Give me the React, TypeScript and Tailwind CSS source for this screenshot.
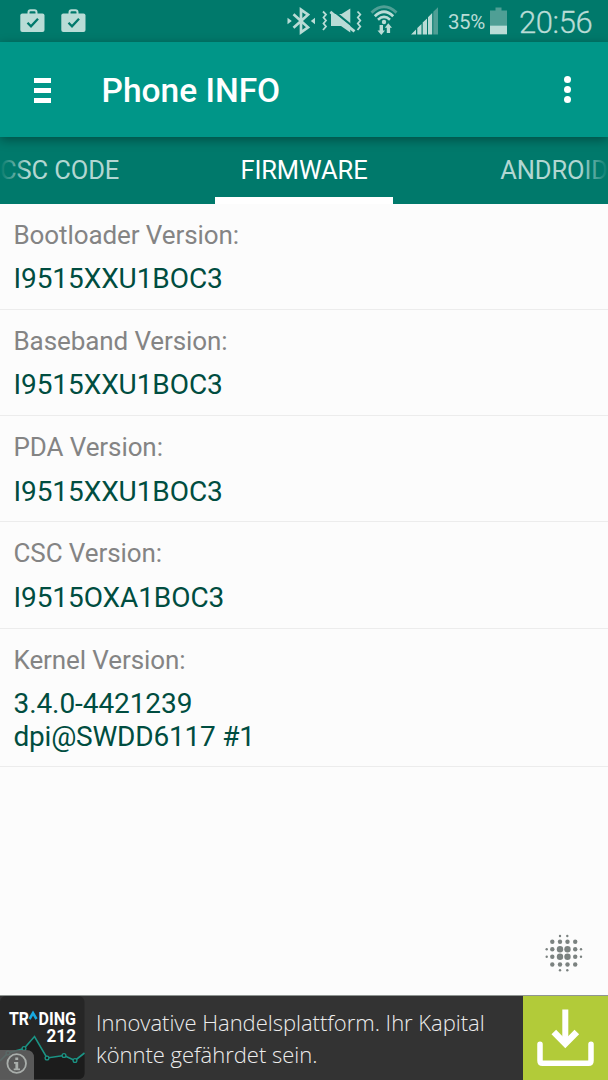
import React, { useState } from "react";
import clsx from "clsx";

const tabs = ["CSC CODE", "FIRMWARE", "ANDROID"];

const rows = [
  { label: "Bootloader Version:", value: ["I9515XXU1BOC3"] },
  { label: "Baseband Version:", value: ["I9515XXU1BOC3"] },
  { label: "PDA Version:", value: ["I9515XXU1BOC3"] },
  { label: "CSC Version:", value: ["I9515OXA1BOC3"] },
  { label: "Kernel Version:", value: ["3.4.0-4421239", "dpi@SWDD6117 #1"] },
];

const BriefcaseIcon = () => (
  <svg width="25" height="24" viewBox="0 0 25 24">
    <path d="M8.5 6V3.2Q8.5 1.2 10.5 1.2H14.5Q16.5 1.2 16.5 3.2V6" fill="none" stroke="#b9dcd6" strokeWidth="2" />
    <rect x="0.3" y="4.6" width="24.2" height="18.3" rx="2" fill="#b9dcd6" />
    <path d="M7.5 13.8L11 17.4L18 9.8" fill="none" stroke="#00796b" strokeWidth="2.3" />
  </svg>
);

const StatusIcons = () => (
  <svg width="160" height="42" viewBox="280 0 160 42" fill="none" stroke="#b9dcd6">
    {/* bluetooth */}
    <path d="M293.5 14.3L308 27.3L301 32.3V9.7L308 14.7L293.5 27.7" strokeWidth="2.7" />
    <path d="M287.5 17.8L291.8 21L287.5 24.2ZM315 17.8L310.8 21L315 24.2Z" fill="#b9dcd6" stroke="none" />
    {/* vibrate, sound off */}
    <path d="M323 11.5L326 14.5L323.5 17.5L326 20.5L323.5 23.5L326 26.5L323 30" strokeWidth="1.8" />
    <path d="M357.5 11.5L360.3 14.5L357.8 17.5L360.3 20.5L357.8 23.5L360.3 26.5L357.5 30" strokeWidth="1.8" />
    <path d="M331 14H341.5L350.3 8.5V32.5L341 26H331Z" fill="#b9dcd6" stroke="none" />
    <path d="M332 9.7L356.5 29.5" stroke="#00796b" strokeWidth="2.2" />
    <path d="M330.3 11.8L354.5 31.3" strokeWidth="2.8" />
    {/* wifi */}
    <path d="M371.5 12.6Q384 1 396.5 12.6" stroke="#4f9f95" strokeWidth="2.8" />
    <path d="M374.8 16.2Q384 7.4 393.2 16.2" strokeWidth="2.8" />
    <path d="M378 19.8Q384 14 390 19.8" strokeWidth="2.6" />
    <circle cx="384" cy="22" r="2.2" fill="#b9dcd6" stroke="none" />
    <path d="M379.6 25H383V30.5H385L381.3 35L377.5 30.5H379.6ZM386.8 33V27.8H384.8L388.3 23.3L392 27.8H390.1V33Z" fill="#b9dcd6" stroke="none" />
    {/* signal */}
    <path d="M411 34.6L416 29.4V34.6ZM417.3 28L421.5 24V34.6H417.3ZM422.7 22.5L427 18.4V34.6H422.7ZM428 17.2L432.2 13V34.6H428Z" fill="#b9dcd6" stroke="none" />
    <path d="M433.3 11.8L438 7.3V34.6H433.3Z" fill="#4f9f95" stroke="none" />
  </svg>
);

const BatteryIcon = () => (
  <svg width="17" height="28" viewBox="0 0 17 28">
    <path d="M0 3.5H5.5V0.5H11.5V3.5H17V18.5H0Z" fill="#4f9f95" />
    <rect y="18.5" width="17" height="8.8" fill="#b9dcd6" />
  </svg>
);

const StatusBar = () => (
  <div className="flex h-[42px] items-start bg-[#00796b] text-[#b9dcd6]">
    <div className="flex gap-[15.5px] pt-[9px] pl-5">
      <BriefcaseIcon />
      <BriefcaseIcon />
    </div>
    <div className="ml-auto flex h-full items-start pr-[15px]">
      <StatusIcons />
      <span className="ml-2 mt-[9px] w-[37px] whitespace-nowrap text-[20.5px] leading-[26px] tracking-[-0.4px]">35%</span>
      <div className="ml-[5px] pt-[6.5px]">
        <BatteryIcon />
      </div>
      <span className="ml-3 mt-[5px] w-[74px] whitespace-nowrap text-[31px] font-light leading-[36px] tracking-[-0.4px] [-webkit-text-stroke:0.3px_#b9dcd6]">20:56</span>
    </div>
  </div>
);

const ActionBar = () => (
  <div className="relative z-10 flex h-[95px] items-center bg-[#009688] pl-[34px] pr-[37px] shadow-[0_3px_10px_rgba(0,0,0,0.35)]">
    <button className="flex w-[17px] flex-col gap-[5px] pt-[2px]">
      <span className="h-[5px] bg-white" />
      <span className="h-[5px] bg-white" />
      <span className="h-[5px] bg-white" />
    </button>
    <h1 className="ml-[50.5px] whitespace-nowrap pt-[3px] text-[33.5px] font-medium leading-[40px] text-white">Phone INFO</h1>
    <button className="ml-auto flex flex-col gap-[3px]">
      <span className="size-[7px] rounded-full bg-white" />
      <span className="size-[7px] rounded-full bg-white" />
      <span className="size-[7px] rounded-full bg-white" />
    </button>
  </div>
);

const TabStrip = () => {
  const [active, setActive] = useState("FIRMWARE");

  return (
    <div className="relative flex h-[67px] justify-between bg-[#00796b] text-[25.5px] leading-[30px] tracking-[-0.1px]">
      {tabs.map((tab) => (
        <button
          key={tab}
          onClick={() => setActive(tab)}
          className={clsx(
            "flex w-[178px] whitespace-nowrap border-b-[7px] pt-[18px]",
            active === tab ? "border-white text-white" : "border-transparent text-[#b2d7d2]",
            tab === "FIRMWARE" && "justify-center",
            tab === "ANDROID" && "justify-end"
          )}>
          {tab}
        </button>
      ))}
      <div className="pointer-events-none absolute inset-y-0 left-0 w-7 bg-linear-to-r from-[#00796b] to-transparent" />
      <div className="pointer-events-none absolute inset-y-0 right-0 w-7 bg-linear-to-l from-[#00796b] to-transparent" />
    </div>
  );
};

const InfoList = () => (
  <ul>
    {rows.map((row) => (
      <li key={row.label} className="border-b border-[#ececec] px-[13.5px] pb-[13.85px] pt-[16.1px] last:pb-[13px]">
        <div className="text-[26px] leading-[30px] tracking-[-0.09px] text-[#848484]">{row.label}</div>
        <div className="mt-[12.2px] text-[28px] leading-[33px] tracking-[-0.08px] text-[#004d40]">
          {row.value.map((line) => (
            <div key={line} className="last:even:tracking-[-0.22px]">{line}</div>
          ))}
        </div>
      </li>
    ))}
  </ul>
);

const dots = [
  [30, 16, 1.2], [37.3, 16, 1.2],
  [22.3, 21.7, 2.2], [30, 21.7, 2.2], [37.5, 21.7, 2.2], [45.2, 21.7, 2.2],
  [16.7, 29.3, 1.2], [22.3, 29.3, 2.2], [30, 29.3, 3.2], [37.5, 29.3, 3.2], [45.2, 29.3, 2.2], [51, 29.3, 1.2],
  [16.7, 36.8, 1.2], [22.3, 36.8, 2.2], [30, 36.8, 3.2], [37.5, 36.8, 3.2], [45.2, 36.8, 2.2], [51, 36.8, 1.2],
  [22.3, 44.5, 2.2], [30, 44.5, 2.2], [37.5, 44.5, 2.2], [45.2, 44.5, 2.2],
  [30, 50.3, 1.2], [37.3, 50.3, 1.2],
];

const DotsIcon = () => (
  <svg width="78" height="70" viewBox="0 0 78 70">
    {dots.map(([x, y, r]) => (
      <circle key={`${x}-${y}`} cx={x} cy={y} r={r} fill="#7b8280" />
    ))}
  </svg>
);

const TradingLogo = () => (
  <svg width="85" height="84" viewBox="0 1 85 84" fontFamily="Roboto, sans-serif" fontWeight="700" fontSize="17.5" fill="#fff">
    <rect y="1" width="84.5" height="83" rx="6" fill="#262626" />
    <path d="M0 65L8 58L24 53.5L34.5 41.5L47 63.5L64 60.5L75 65.5L84.5 58V78Q84.5 84 78 84H0Z" fill="#1c1c1c" />
    <path d="M0 66L8 58L24 53.5L34.5 41.5L47 63L64 60.5L75 65.5L84.5 58" fill="none" stroke="#1b9485" strokeWidth="1.6" />
    {[[8, 58], [24, 53.5], [47, 63], [64, 60.5], [75, 65.5]].map(([x, y]) => (
      <circle key={x} cx={x} cy={y} r="1.9" fill="#1c1c1c" stroke="#1b9485" strokeWidth="1.3" />
    ))}
    <text x="9" y="29.5" textLength="20" lengthAdjust="spacingAndGlyphs">TR</text>
    <path d="M29.5 24L33 18L36.5 24" fill="none" stroke="#18a9e0" strokeWidth="2.6" />
    <text x="38.5" y="29.5" textLength="37.5" lengthAdjust="spacingAndGlyphs">DING</text>
    <text x="46.5" y="46.8" textLength="29.5" lengthAdjust="spacingAndGlyphs">212</text>
    <path d="M0 55H26Q34 55 34 63V85H0Z" fill="#626262" fillOpacity="0.88" />
    <circle cx="16.7" cy="68.5" r="9.3" fill="none" stroke="#a9aeab" strokeWidth="1.8" />
    <path d="M15.3 62.5H18.2V65H15.3ZM14 67H18.2V73.5H20V75.3H13.7V73.5H15.4V68.8H14Z" fill="#a9aeab" />
  </svg>
);

const DownloadIcon = () => (
  <svg width="85" height="84" viewBox="0 0.5 85 84" fill="none" stroke="#fff">
    <path d="M42.3 14V48" strokeWidth="6" />
    <path d="M30.8 36.5L42.3 48.2L53.8 36.5" strokeWidth="6.5" />
    <path d="M17 48.8V65.2Q17 67.8 19.5 67.8H65.5Q68 67.8 68 65.2V48.8" strokeWidth="5.5" strokeLinecap="round" />
  </svg>
);

const AdBanner = () => (
  <div className="flex h-[85px] border-t border-[#8f9592] bg-[#333333]">
    <TradingLogo />
    <p className="ml-[11px] flex-1 whitespace-nowrap pt-[9.5px] font-['Open_Sans',sans-serif] text-[22px] font-light leading-[32px] tracking-[-0.02px] text-[#ededed]">
      Innovative Handelsplattform. Ihr Kapital
      <br />
      könnte gefährdet sein.
    </p>
    <div className="w-[85px] bg-[#b2cb39]">
      <DownloadIcon />
    </div>
  </div>
);

const App = () => {
  return (
    <div className="flex h-[1080px] w-[608px] flex-col overflow-hidden bg-[#fcfcfc] font-[Roboto,sans-serif]">
      <StatusBar />
      <ActionBar />
      <TabStrip />
      <InfoList />
      <div className="mb-[5px] ml-auto mt-auto">
        <DotsIcon />
      </div>
      <AdBanner />
    </div>
  );
};

export default App;
